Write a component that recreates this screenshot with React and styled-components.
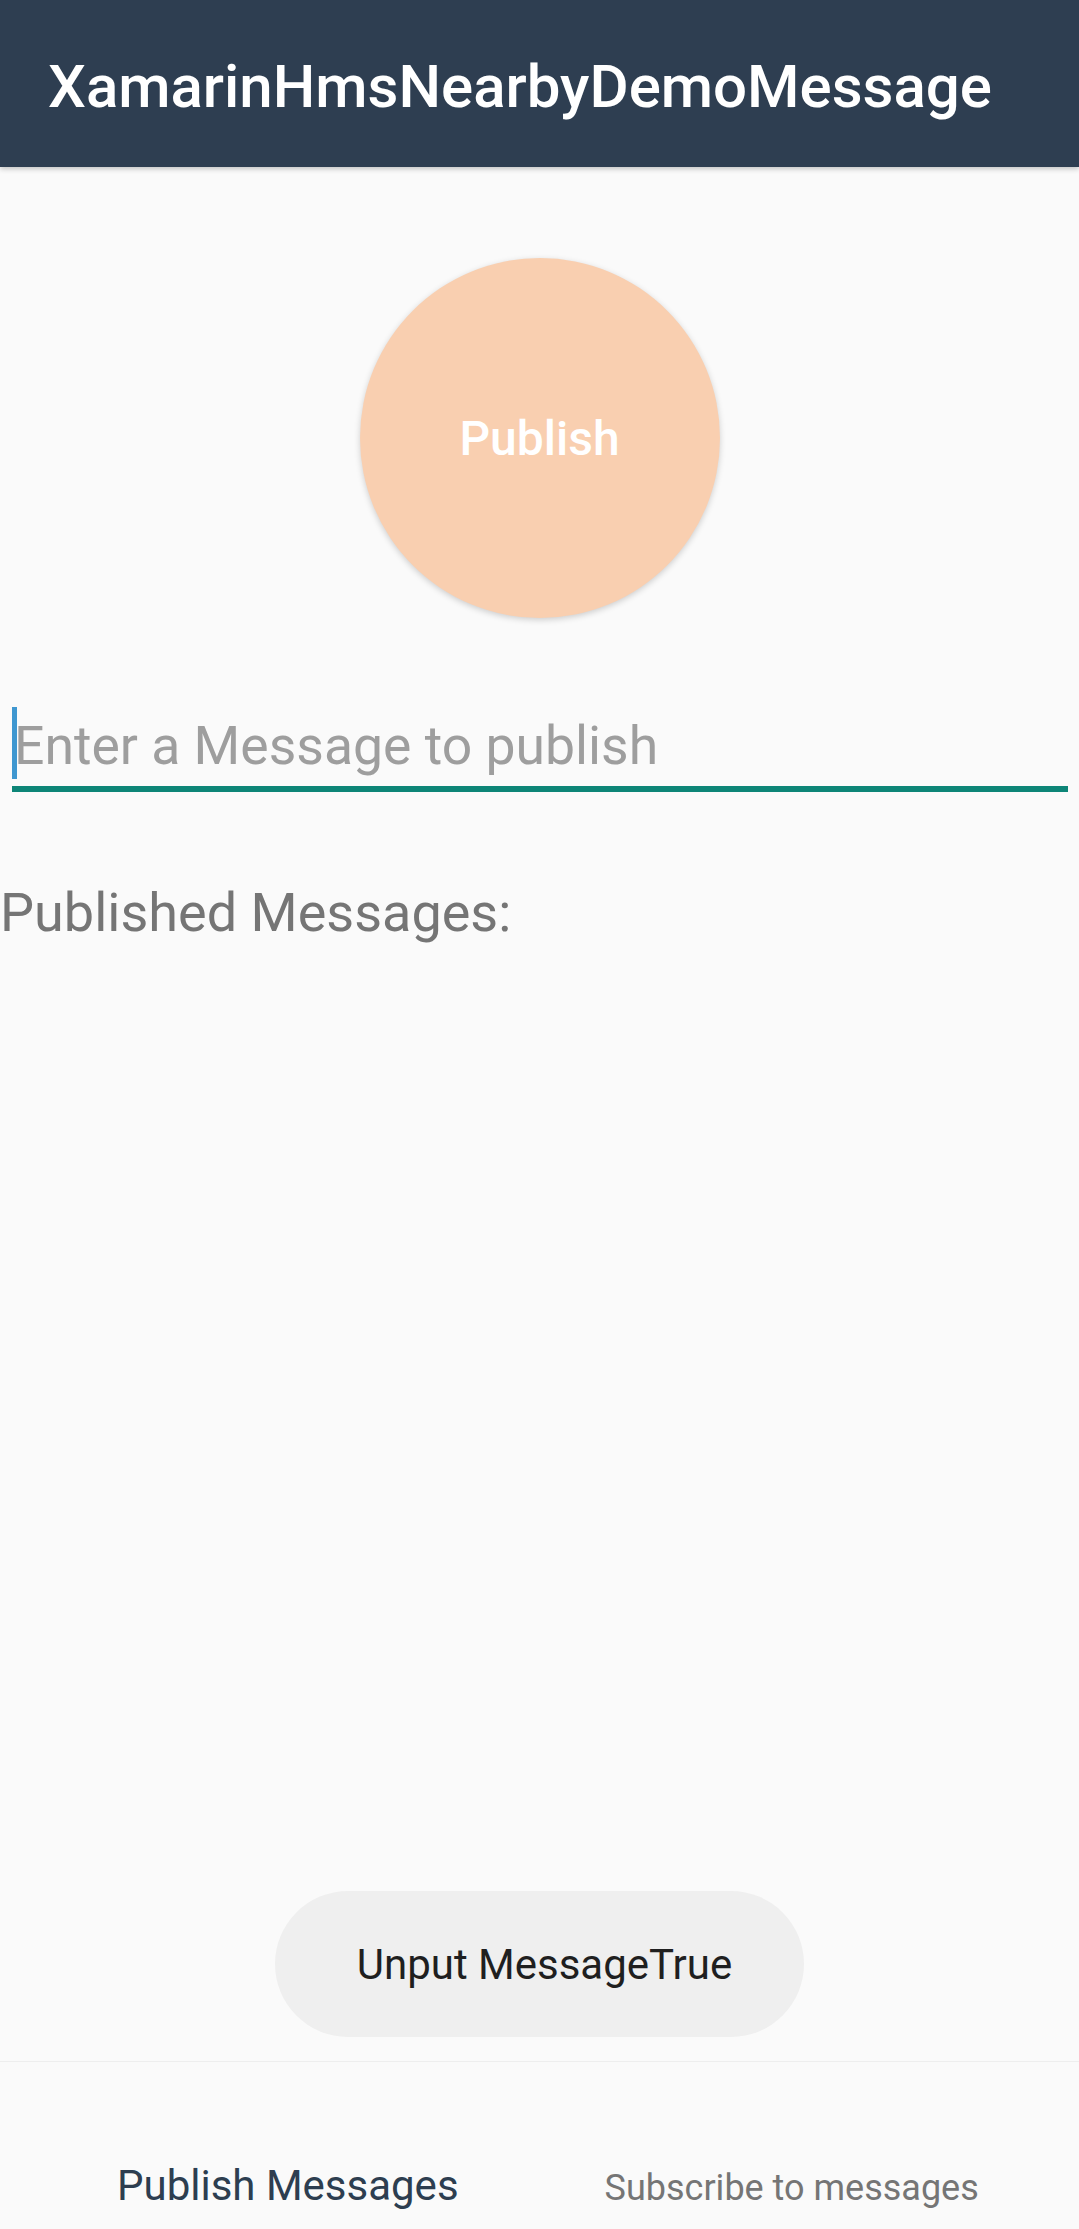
import styled, { createGlobalStyle } from "styled-components";

const GlobalStyle = createGlobalStyle`
  html, body {
    margin: 0;
    padding: 0;
    background: #fafafa;
  }
  * {
    box-sizing: border-box;
  }
`;

const Screen = styled.div`
  position: relative;
  width: 1079px;
  height: 2229px;
  display: flex;
  flex-direction: column;
  background-color: #fafafa;
  font-family: Roboto, "Liberation Sans", sans-serif;
  overflow: hidden;
`;

const Toolbar = styled.header`
  position: relative;
  z-index: 2;
  height: 167px;
  flex-shrink: 0;
  display: flex;
  align-items: center;
  padding: 6px 0 0 48px;
  background-color: #2e3e51;
  box-shadow: 0 2px 5px rgba(0, 0, 0, 0.22);
`;

const Title = styled.h1`
  margin: 0;
  font-size: 60px;
  font-weight: 500;
  color: #ffffff;
`;

const Content = styled.main`
  flex: 1;
  display: flex;
  flex-direction: column;
`;

const PublishButton = styled.button`
  align-self: center;
  width: 360px;
  height: 360px;
  margin-top: 91px;
  border: none;
  border-radius: 50%;
  background-color: #f9cfb0;
  box-shadow: 0 2px 6px rgba(0, 0, 0, 0.18);
  font-family: Roboto, "Liberation Sans", sans-serif;
  font-size: 48px;
  font-weight: 500;
  color: #ffffff;
  display: flex;
  align-items: center;
  justify-content: center;
  padding: 0;
`;

const MessageField = styled.div`
  margin: 82px 11px 0 12px;
  height: 92px;
  display: flex;
  align-items: flex-start;
  border-bottom: 6px solid #0d8577;
`;

const Caret = styled.span`
  width: 5px;
  height: 72px;
  margin-top: 7px;
  background-color: #3f97d0;
`;

const Placeholder = styled.span`
  margin: 15px 0 0 -3px;
  font-size: 53.5px;
  line-height: 1.172;
  color: #9e9e9e;
`;

const SectionLabel = styled.h2`
  margin: 89px 0 0 0;
  font-size: 54px;
  font-weight: 400;
  line-height: 1.172;
  color: #757575;
`;

const Toast = styled.div`
  position: absolute;
  left: 275px;
  top: 1891px;
  width: 529px;
  height: 146px;
  border-radius: 73px;
  background-color: #efefef;
  display: flex;
  align-items: center;
  justify-content: center;
  padding-left: 10px;
  font-size: 42px;
  color: #1f1f1f;
`;

const BottomNav = styled.nav`
  height: 168px;
  flex-shrink: 0;
  display: flex;
  align-items: baseline;
  gap: 146px;
  padding: 99px 0 0 117px;
  border-top: 1px solid #eeeeee;
  background-color: #fafafa;
`;

const NavLabel = styled.span`
  font-size: ${(p) => (p.$active ? "42px" : "36px")};
  line-height: 1.172;
  color: ${(p) => (p.$active ? "#2d3e50" : "#757575")};
`;

export default function App() {
  return (
    <Screen>
      <GlobalStyle />
      <Toolbar>
        <Title>XamarinHmsNearbyDemoMessage</Title>
      </Toolbar>
      <Content>
        <PublishButton type="button">Publish</PublishButton>
        <MessageField>
          <Caret />
          <Placeholder>Enter a Message to publish</Placeholder>
        </MessageField>
        <SectionLabel>Published Messages:</SectionLabel>
      </Content>
      <BottomNav>
        <NavLabel $active>Publish Messages</NavLabel>
        <NavLabel>Subscribe to messages</NavLabel>
      </BottomNav>
      <Toast>Unput MessageTrue</Toast>
    </Screen>
  );
}
